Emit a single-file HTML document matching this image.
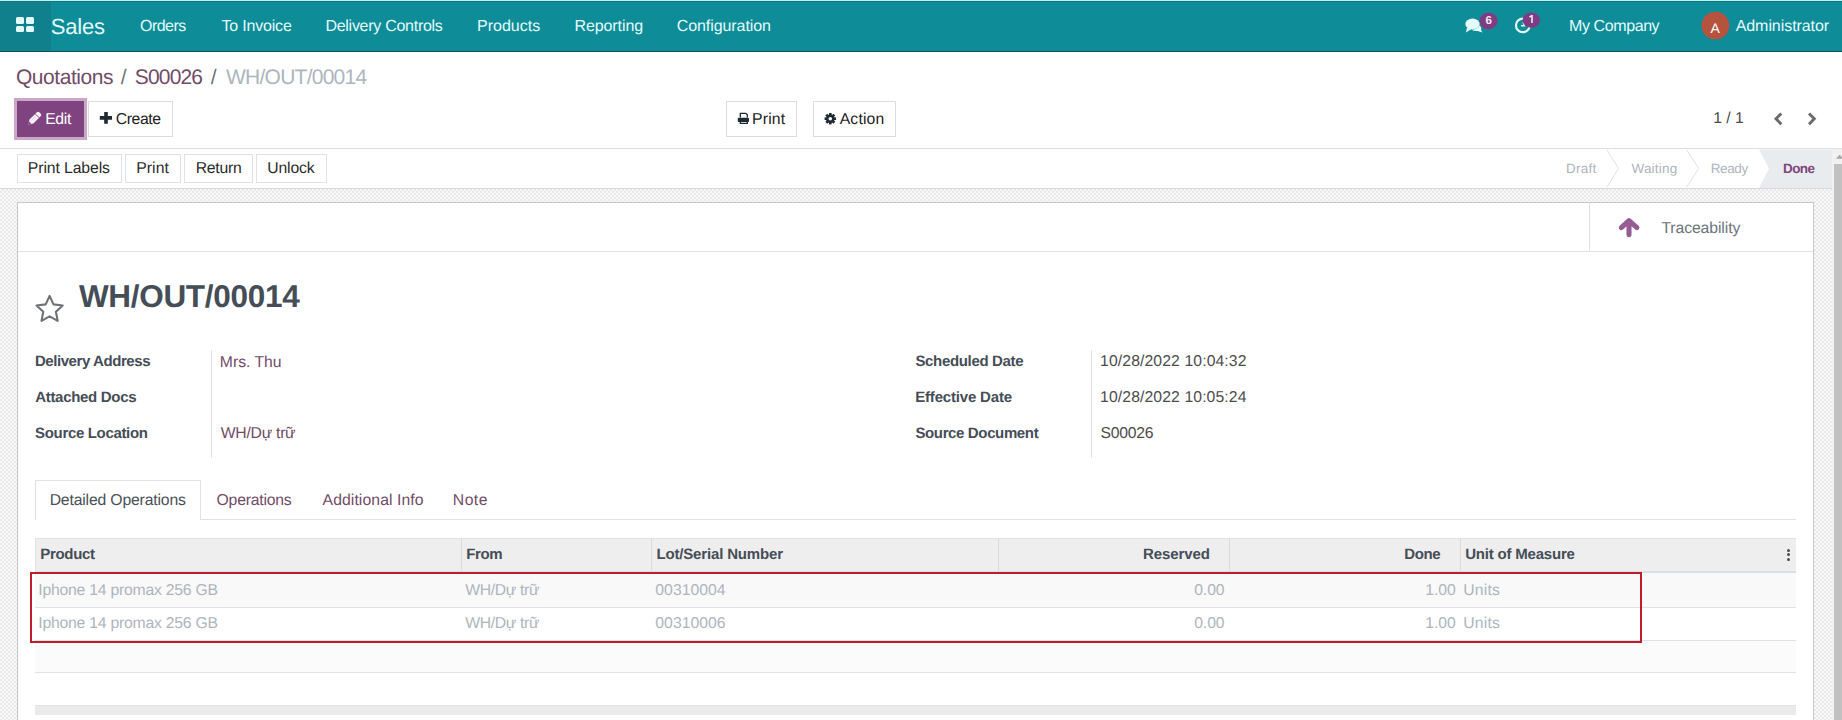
<!DOCTYPE html>
<html><head><meta charset="utf-8"><style>
html,body{margin:0;padding:0}
body{width:1842px;height:720px;overflow:hidden;position:relative;background:#fff;font-family:"Liberation Sans",sans-serif;text-rendering:geometricPrecision}
.t{position:absolute;white-space:nowrap}
.b{position:absolute;box-sizing:border-box}
svg{position:absolute;overflow:visible}
</style></head><body>
<div class='b' style='left:0px;top:0px;width:1842px;height:52px;background:#0e8c98'></div>
<div class='b' style='left:0px;top:0px;width:1842px;height:1px;background:#b4f6fa'></div>
<div class='b' style='left:0px;top:1px;width:1842px;height:1px;background:#1b7178'></div>
<div class='b' style='left:0px;top:51px;width:1842px;height:1px;background:#0b4f59'></div>
<div class='b' style='left:0px;top:2px;width:51px;height:49px;background:#10808c'></div>
<div class='b' style='left:16px;top:17px;width:8px;height:6.8px;background:#e3fbfb;border-radius:1.5px'></div>
<div class='b' style='left:26px;top:17px;width:8px;height:6.8px;background:#e3fbfb;border-radius:1.5px'></div>
<div class='b' style='left:16px;top:25.5px;width:8px;height:6.8px;background:#e3fbfb;border-radius:1.5px'></div>
<div class='b' style='left:26px;top:25.5px;width:8px;height:6.8px;background:#e3fbfb;border-radius:1.5px'></div>
<div class='t' style='left:50.72px;top:16.04px;font-size:22px;line-height:22px;font-weight:400;color:#e3fbfb;letter-spacing:-0.204px;'>Sales</div>
<div class='t' style='left:140.03px;top:19.17px;font-size:16px;line-height:16px;font-weight:400;color:#e3fbfb;letter-spacing:-0.541px;'>Orders</div>
<div class='t' style='left:221.39px;top:19.17px;font-size:16px;line-height:16px;font-weight:400;color:#e3fbfb;letter-spacing:-0.175px;'>To Invoice</div>
<div class='t' style='left:325.44px;top:19.17px;font-size:16px;line-height:16px;font-weight:400;color:#e3fbfb;letter-spacing:-0.276px;'>Delivery Controls</div>
<div class='t' style='left:477.04px;top:19.17px;font-size:16px;line-height:16px;font-weight:400;color:#e3fbfb;letter-spacing:-0.006px;'>Products</div>
<div class='t' style='left:574.44px;top:19.17px;font-size:16px;line-height:16px;font-weight:400;color:#e3fbfb;letter-spacing:-0.083px;'>Reporting</div>
<div class='t' style='left:676.71px;top:19.17px;font-size:16px;line-height:16px;font-weight:400;color:#e3fbfb;letter-spacing:-0.071px;'>Configuration</div>
<div class='t' style='left:1569.04px;top:19.07px;font-size:16px;line-height:16px;font-weight:400;color:#e3fbfb;letter-spacing:-0.407px;'>My Company</div>
<div class='t' style='left:1735.68px;top:19.07px;font-size:16px;line-height:16px;font-weight:400;color:#e3fbfb;letter-spacing:-0.063px;'>Administrator</div>
<svg style="left:0;top:0" width="1842" height="52">
<ellipse cx="1472.5" cy="24" rx="7.2" ry="5.4" fill="#e3fbfb"/>
<path d="M1467 27.5 L1466 32.5 L1471.5 29 Z" fill="#e3fbfb"/>
<path d="M1479.5 25.5 Q1482 27.5 1481 30 L1482.5 32.5 L1477.5 31 Q1474 31.5 1471.5 29.8 Q1477.5 29.5 1479.5 25.5 Z" fill="#e3fbfb"/>
<ellipse cx="1488.6" cy="21" rx="9.1" ry="8.4" fill="#803c82"/>
<circle cx="1522.8" cy="25.4" r="6.8" fill="none" stroke="#e3fbfb" stroke-width="2.2"/>
<path d="M1521 25.8 L1524.5 25.8 L1523 22.2" fill="none" stroke="#e3fbfb" stroke-width="1.4"/>
<ellipse cx="1531.3" cy="20.1" rx="8.8" ry="7.6" fill="#803c82"/>
<path d="M1532 15 L1532 22.9 M1532.2 15.3 L1529.5 17.2" fill="none" stroke="#f4e8f4" stroke-width="1.6"/>
<circle cx="1715.4" cy="25.6" r="13.9" fill="#b5533f"/>
</svg>
<div class='t' style='left:1485.6px;top:14px;font-size:11.5px;line-height:14px;font-weight:700;color:#f4e8f4'>6</div>
<div class='t' style='left:1710.6px;top:19.5px;font-size:14px;line-height:16px;color:#fff'>A</div>
<div class='t' style='left:15.99px;top:66.9px;font-size:21px;line-height:21px;font-weight:400;color:#714b67;letter-spacing:-0.461px;'>Quotations</div>
<div class='t' style='left:120.8px;top:66.9px;font-size:21px;line-height:21px;color:#6c757d'>/</div>
<div class='t' style='left:134.78px;top:66.9px;font-size:21px;line-height:21px;font-weight:400;color:#714b67;letter-spacing:-0.824px;'>S00026</div>
<div class='t' style='left:210.8px;top:66.9px;font-size:21px;line-height:21px;color:#6c757d'>/</div>
<div class='t' style='left:226.06px;top:66.9px;font-size:21px;line-height:21px;font-weight:400;color:#adb5bd;letter-spacing:-0.757px;'>WH/OUT/00014</div>
<div class='b' style='left:14px;top:98px;width:73px;height:42px;background:#cba6c7'></div>
<div class='b' style='left:17px;top:101px;width:67px;height:36px;background:#7f447f'></div>
<div class='t' style='left:45.14px;top:111.88px;font-size:15.75px;line-height:15.75px;font-weight:400;color:#fff;letter-spacing:-0.307px;'>Edit</div>
<div class='b' style='left:88px;top:101px;width:85px;height:36px;border:1px solid #dcdcdc;background:#fff'></div>
<div class='t' style='left:115.81px;top:111.88px;font-size:15.75px;line-height:15.75px;font-weight:400;color:#222;letter-spacing:-0.404px;'>Create</div>
<div class='b' style='left:726px;top:101px;width:71px;height:36px;border:1px solid #dcdcdc;background:#fff'></div>
<div class='t' style='left:752.04px;top:111.88px;font-size:15.75px;line-height:15.75px;font-weight:400;color:#222;letter-spacing:0.173px;'>Print</div>
<div class='b' style='left:813px;top:101px;width:83px;height:36px;border:1px solid #dcdcdc;background:#fff'></div>
<div class='t' style='left:839.68px;top:111.88px;font-size:15.75px;line-height:15.75px;font-weight:400;color:#222;letter-spacing:0.17px;'>Action</div>
<div class='t' style='left:1713.31px;top:111.08px;font-size:15.75px;line-height:15.75px;font-weight:400;color:#4a4a4a;letter-spacing:-0.068px;'>1 / 1</div>
<div class='b' style='left:0px;top:148px;width:1842px;height:1px;background:#dcdfe2'></div>
<div class='b' style='left:17px;top:154px;width:105px;height:29px;border:1px solid #dee2e6;background:#fff'></div>
<div class='b' style='left:125px;top:154px;width:56px;height:29px;border:1px solid #dee2e6;background:#fff'></div>
<div class='b' style='left:184px;top:154px;width:69px;height:29px;border:1px solid #dee2e6;background:#fff'></div>
<div class='b' style='left:256px;top:154px;width:71px;height:29px;border:1px solid #dee2e6;background:#fff'></div>
<div class='t' style='left:27.84px;top:160.98px;font-size:15.75px;line-height:15.75px;font-weight:400;color:#2b2b2b;letter-spacing:-0.096px;'>Print Labels</div>
<div class='t' style='left:136.14px;top:160.98px;font-size:15.75px;line-height:15.75px;font-weight:400;color:#2b2b2b;letter-spacing:0.098px;'>Print</div>
<div class='t' style='left:195.64px;top:160.98px;font-size:15.75px;line-height:15.75px;font-weight:400;color:#2b2b2b;letter-spacing:-0.215px;'>Return</div>
<div class='t' style='left:267.21px;top:160.98px;font-size:15.75px;line-height:15.75px;font-weight:400;color:#2b2b2b;letter-spacing:-0.122px;'>Unlock</div>
<svg style="left:0;top:0" width="1842" height="200">
<polygon points="1759,149.5 1832,149.5 1832,188 1759,188 1769,168.5" fill="#e9ecef"/>
<polyline points="1607,150 1618.5,168.5 1607,187" fill="none" stroke="#dee2e6" stroke-width="1"/>
<polyline points="1686.7,150 1698.7,168.5 1686.7,187" fill="none" stroke="#dee2e6" stroke-width="1"/>
</svg>
<div class='t' style='left:1566.07px;top:162.34px;font-size:13.5px;line-height:13.5px;font-weight:400;color:#adb5bd;letter-spacing:0.222px;'>Draft</div>
<div class='t' style='left:1631.45px;top:162.34px;font-size:13.5px;line-height:13.5px;font-weight:400;color:#adb5bd;letter-spacing:0.214px;'>Waiting</div>
<div class='t' style='left:1710.77px;top:162.34px;font-size:13.5px;line-height:13.5px;font-weight:400;color:#adb5bd;letter-spacing:-0.41px;'>Ready</div>
<div class='t' style='left:1782.97px;top:162.18px;font-size:13.5px;line-height:13.5px;font-weight:700;color:#80437a;letter-spacing:-0.548px;'>Done</div>
<div class='b' style='left:0px;top:188px;width:1832px;height:1px;background:#d8d8d8'></div>
<div class='b' style='left:0px;top:189px;width:1832px;height:531px;background:#f7f7f7;background-image:repeating-conic-gradient(#e9e9e9 0 25%,#f8f8f8 0 50%);background-size:4px 4px'></div>
<div class='b' style='left:1832px;top:149px;width:10px;height:571px;background:#f1f1f1'></div>
<div class='b' style='left:1834px;top:164px;width:8px;height:556px;background:#c1c1c1'></div>
<svg style='left:0;top:0' width='1842' height='200'><polygon points='1836,158.8 1843.4,158.8 1839.7,154.8' fill='#a3a3a3'/></svg>
<div class='b' style='left:17px;top:202px;width:1797px;height:600px;border:1px solid #c8c8c8;background:#fff'></div>
<div class='b' style='left:18px;top:251px;width:1795px;height:1px;background:#dee2e6'></div>
<div class='b' style='left:1589px;top:203px;width:1px;height:48px;background:#e2e2e2'></div>
<svg style="left:0;top:0" width="1842" height="720">
<path d="M1621.3 227.6 L1629 220.6 L1636.9 227.6 M1629 221.5 L1629 234.6" fill="none" stroke="#955d93" stroke-width="5.1" stroke-linecap="round" stroke-linejoin="round"/>
<path d="M49.60 295.90 L53.49 304.34 L62.72 305.44 L55.90 311.75 L57.71 320.86 L49.60 316.32 L41.49 320.86 L43.30 311.75 L36.48 305.44 L45.71 304.34 Z" fill="none" stroke="#6e7276" stroke-width="2.1" stroke-linejoin="round"/>
</svg>
<div class='t' style='left:1661.43px;top:220.83px;font-size:15.75px;line-height:15.75px;font-weight:400;color:#6c757d;letter-spacing:-0.095px'>Traceability</div>
<div class='t' style='left:78.89px;top:281.0px;font-size:31.5px;line-height:31.5px;font-weight:700;color:#454d57;letter-spacing:-0.299px;'>WH/OUT/00014</div>
<div class='t' style='left:34.89px;top:353.52px;font-size:15px;line-height:15px;font-weight:700;color:#454d57;letter-spacing:-0.422px;'>Delivery Address</div>
<div class='t' style='left:35.2px;top:389.52px;font-size:15px;line-height:15px;font-weight:700;color:#454d57;letter-spacing:-0.303px;'>Attached Docs</div>
<div class='t' style='left:35.11px;top:425.72px;font-size:15px;line-height:15px;font-weight:700;color:#454d57;letter-spacing:-0.335px;'>Source Location</div>
<div class='t' style='left:915.41px;top:353.52px;font-size:15px;line-height:15px;font-weight:700;color:#454d57;letter-spacing:-0.338px;'>Scheduled Date</div>
<div class='t' style='left:915.19px;top:389.52px;font-size:15px;line-height:15px;font-weight:700;color:#454d57;letter-spacing:-0.177px;'>Effective Date</div>
<div class='t' style='left:915.41px;top:425.72px;font-size:15px;line-height:15px;font-weight:700;color:#454d57;letter-spacing:-0.366px;'>Source Document</div>
<div class='b' style='left:211px;top:350px;width:1px;height:108px;background:#dee2e6'></div>
<div class='b' style='left:1091px;top:350px;width:1px;height:108px;background:#dee2e6'></div>
<div class='t' style='left:219.84px;top:355.08px;font-size:15.75px;line-height:15.75px;font-weight:400;color:#714b67;letter-spacing:-0.014px;'>Mrs. Thu</div>
<div class='t' style='left:220.76px;top:426.08px;font-size:15.75px;line-height:15.75px;font-weight:400;color:#714b67;letter-spacing:-0.272px;'>WH/Dự trữ</div>
<div class='t' style='left:1100.11px;top:353.58px;font-size:15.75px;line-height:15.75px;font-weight:400;color:#4c4c4c;letter-spacing:0.102px;'>10/28/2022 10:04:32</div>
<div class='t' style='left:1100.11px;top:389.58px;font-size:15.75px;line-height:15.75px;font-weight:400;color:#4c4c4c;letter-spacing:0.1px;'>10/28/2022 10:05:24</div>
<div class='t' style='left:1100.52px;top:425.78px;font-size:15.75px;line-height:15.75px;font-weight:400;color:#4c4c4c;letter-spacing:-0.267px;'>S00026</div>
<div class='b' style='left:35px;top:480px;width:166px;height:40px;border:1px solid #dee2e6;border-bottom:none;background:#fff'></div>
<div class='b' style='left:201px;top:519px;width:1595px;height:1px;background:#dee2e6'></div>
<div class='t' style='left:49.64px;top:493.28px;font-size:15.75px;line-height:15.75px;font-weight:400;color:#495057;letter-spacing:-0.164px;'>Detailed Operations</div>
<div class='t' style='left:216.54px;top:493.28px;font-size:15.75px;line-height:15.75px;font-weight:400;color:#714b67;letter-spacing:-0.205px;'>Operations</div>
<div class='t' style='left:322.58px;top:493.28px;font-size:15.75px;line-height:15.75px;font-weight:400;color:#714b67;letter-spacing:0.079px;'>Additional Info</div>
<div class='t' style='left:452.84px;top:493.28px;font-size:15.75px;line-height:15.75px;font-weight:400;color:#714b67;letter-spacing:0.448px;'>Note</div>
<div class='b' style='left:35px;top:538px;width:1761px;height:35px;background:#eeeeee;border-top:1px solid #dee2e6;border-left:1px solid #e2e2e2'></div>
<div class='b' style='left:461px;top:539px;width:1px;height:32px;background:#dadada'></div>
<div class='b' style='left:651px;top:539px;width:1px;height:32px;background:#dadada'></div>
<div class='b' style='left:998px;top:539px;width:1px;height:32px;background:#dadada'></div>
<div class='b' style='left:1229px;top:539px;width:1px;height:32px;background:#dadada'></div>
<div class='b' style='left:1460px;top:539px;width:1px;height:32px;background:#dadada'></div>
<div class='b' style='left:35px;top:571px;width:1761px;height:2px;background:#dcdfe2'></div>
<div class='b' style='left:35px;top:573px;width:1761px;height:34px;background:#f9f9f9'></div>
<div class='b' style='left:35px;top:607px;width:1761px;height:1px;background:#dee2e6'></div>
<div class='b' style='left:35px;top:640px;width:1761px;height:1px;background:#dee2e6'></div>
<div class='b' style='left:35px;top:641px;width:1761px;height:31px;background:#fbfbfb'></div>
<div class='b' style='left:35px;top:672px;width:1761px;height:1px;background:#dee2e6'></div>
<div class='b' style='left:35px;top:705px;width:1761px;height:10px;background:#eaeaea;border-top:1px solid #dee2e6'></div>
<div class='t' style='left:40.19px;top:547.3199999999999px;font-size:15px;line-height:15px;font-weight:700;color:#454d57;letter-spacing:-0.306px'>Product</div>
<div class='t' style='left:466.29px;top:547.3199999999999px;font-size:15px;line-height:15px;font-weight:700;color:#454d57;letter-spacing:-0.371px'>From</div>
<div class='t' style='left:656.39px;top:547.3199999999999px;font-size:15px;line-height:15px;font-weight:700;color:#454d57;letter-spacing:-0.157px'>Lot/Serial Number</div>
<div class='t' style='left:1143.09px;top:547.3199999999999px;font-size:15px;line-height:15px;font-weight:700;color:#454d57;letter-spacing:-0.099px'>Reserved</div>
<div class='t' style='left:1404.19px;top:547.3199999999999px;font-size:15px;line-height:15px;font-weight:700;color:#454d57;letter-spacing:-0.393px'>Done</div>
<div class='t' style='left:1465.17px;top:547.3199999999999px;font-size:15px;line-height:15px;font-weight:700;color:#454d57;letter-spacing:-0.197px'>Unit of Measure</div>
<div class='b' style='left:1787px;top:548.5px;width:3px;height:3px;background:#454d57;border-radius:50%'></div>
<div class='b' style='left:1787px;top:553px;width:3px;height:3px;background:#454d57;border-radius:50%'></div>
<div class='b' style='left:1787px;top:557.5px;width:3px;height:3px;background:#454d57;border-radius:50%'></div>
<div class='t' style='left:38.3px;top:583.28px;font-size:15.75px;line-height:15.75px;font-weight:400;color:#adb5bd;letter-spacing:-0.228px'>Iphone 14 promax 256 GB</div>
<div class='t' style='left:465.26px;top:583.28px;font-size:15.75px;line-height:15.75px;font-weight:400;color:#adb5bd;letter-spacing:-0.36px'>WH/Dự trữ</div>
<div class='t' style='left:655.35px;top:583.28px;font-size:15.75px;line-height:15.75px;font-weight:400;color:#adb5bd;letter-spacing:0.007px'>00310004</div>
<div class='t' style='left:1194.15px;top:583.28px;font-size:15.75px;line-height:15.75px;font-weight:400;color:#adb5bd;letter-spacing:-0.068px'>0.00</div>
<div class='t' style='left:1425.31px;top:583.28px;font-size:15.75px;line-height:15.75px;font-weight:400;color:#adb5bd;letter-spacing:-0.09px'>1.00</div>
<div class='t' style='left:1463.31px;top:583.28px;font-size:15.75px;line-height:15.75px;font-weight:400;color:#adb5bd;letter-spacing:0.15px'>Units</div>
<div class='t' style='left:38.3px;top:616.28px;font-size:15.75px;line-height:15.75px;font-weight:400;color:#adb5bd;letter-spacing:-0.228px'>Iphone 14 promax 256 GB</div>
<div class='t' style='left:465.26px;top:616.28px;font-size:15.75px;line-height:15.75px;font-weight:400;color:#adb5bd;letter-spacing:-0.36px'>WH/Dự trữ</div>
<div class='t' style='left:655.35px;top:616.28px;font-size:15.75px;line-height:15.75px;font-weight:400;color:#adb5bd;letter-spacing:0.007px'>00310006</div>
<div class='t' style='left:1194.15px;top:616.28px;font-size:15.75px;line-height:15.75px;font-weight:400;color:#adb5bd;letter-spacing:-0.068px'>0.00</div>
<div class='t' style='left:1425.31px;top:616.28px;font-size:15.75px;line-height:15.75px;font-weight:400;color:#adb5bd;letter-spacing:-0.09px'>1.00</div>
<div class='t' style='left:1463.31px;top:616.28px;font-size:15.75px;line-height:15.75px;font-weight:400;color:#adb5bd;letter-spacing:0.15px'>Units</div>
<div class='b' style='left:30px;top:572px;width:1612px;height:71px;border:2px solid #c01d28'></div>
<svg style="left:0;top:0" width="1842" height="200">
<g transform="translate(28.6,124.4) rotate(-45)">
<path d="M0 0 L4 -2.8 L14.2 -2.8 Q16.2 -2.8 16.2 -0.8 L16.2 0.8 Q16.2 2.8 14.2 2.8 L4 2.8 Z" fill="#fbeefb"/>
<line x1="12.2" y1="-3" x2="12.2" y2="3" stroke="#7f447f" stroke-width="0.9"/>
<line x1="4.5" y1="-0.8" x2="11.5" y2="-0.8" stroke="#d7bcd4" stroke-width="0.6"/>
<path d="M0.3 0 L2.4 -1.3 L2.4 1.3 Z" fill="#6a3565"/>
</g>
<path d="M106 112 L106 123.7 M99.8 117.9 L112 117.9" stroke="#1f2a33" stroke-width="3.6"/>
<path d="M740.3 117.5 L740.3 113.3 L745.8 113.3 L747.3 114.8 L747.3 117.5" fill="none" stroke="#1f2a33" stroke-width="1.3"/>
<rect x="737.8" y="117.8" width="11.2" height="4.2" rx="0.8" fill="#1f2a33"/>
<path d="M740.3 121.5 L740.3 123.3 L747.3 123.3 L747.3 121.5" fill="none" stroke="#1f2a33" stroke-width="1.3"/>
<g transform="translate(830.3,118.7)" fill="#1f2a33">
<circle r="4.3"/>
<rect x="-1.3" y="-5.7" width="2.6" height="11.4"/>
<rect x="-1.3" y="-5.7" width="2.6" height="11.4" transform="rotate(45)"/>
<rect x="-1.3" y="-5.7" width="2.6" height="11.4" transform="rotate(90)"/>
<rect x="-1.3" y="-5.7" width="2.6" height="11.4" transform="rotate(135)"/>
<circle r="1.8" fill="#fff"/>
</g>
<path d="M1781.3 113.4 L1776 118.8 L1781.3 124.2" fill="none" stroke="#6a6a6a" stroke-width="2.9"/>
<path d="M1809 113.4 L1814.3 118.8 L1809 124.2" fill="none" stroke="#6a6a6a" stroke-width="2.9"/>
</svg>
</body></html>
